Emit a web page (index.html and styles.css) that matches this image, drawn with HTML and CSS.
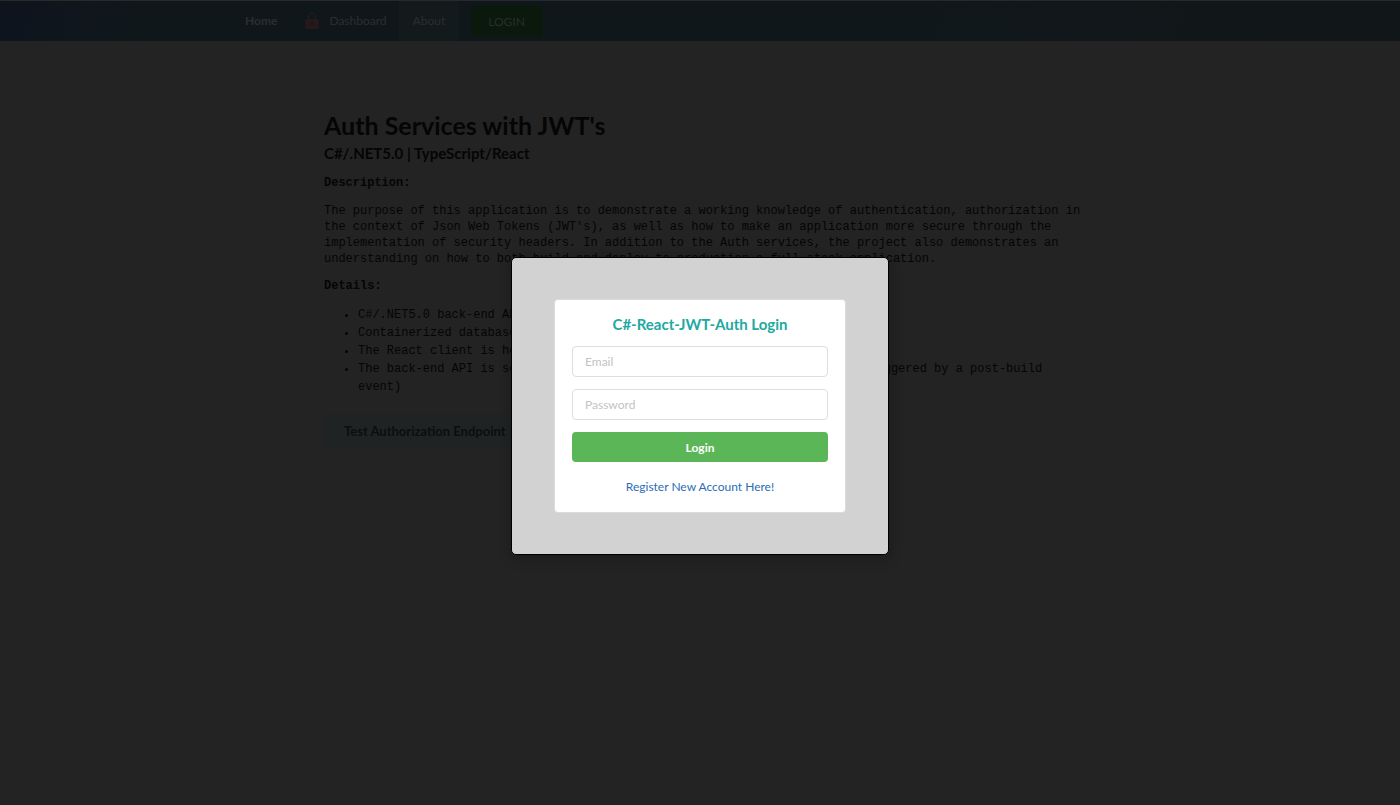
FILE: index.html
```html
<!DOCTYPE html>
<html lang="en">
<head>
<meta charset="utf-8">
<title>Auth Services with JWT's</title>
<link rel="stylesheet" href="styles.css">
</head>
<body>
<header class="navbar">
  <nav class="nav-inner" aria-label="Main">
    <a class="nav-item brand" href="#">Home</a>
    <a class="nav-item dashboard" href="#">
      <svg class="lock" viewBox="0 0 14 18" aria-hidden="true">
        <path d="M3.5 8V5a3.5 3.5 0 0 1 7 0v3" fill="none" stroke="#261a1b" stroke-width="1.5"/>
        <rect x="0.5" y="7" width="13" height="10" rx="1.5" fill="#291819"/>
        <circle cx="7" cy="11.5" r="1.4" fill="#10171b"/>
      </svg>
      Dashboard
    </a>
    <a class="nav-item active" href="#">About</a>
    <button class="nav-login" type="button">LOGIN</button>
  </nav>
</header>
<main class="content">
  <h1>Auth Services with JWT's</h1>
  <h2>C#/.NET5.0 | TypeScript/React</h2>
  <h3>Description:</h3>
  <p>The purpose of this application is to demonstrate a working knowledge of authentication, authorization in the context of Json Web Tokens (JWT's), as well as how to make an application more secure through the implementation of security headers. In addition to the Auth services, the project also demonstrates an understanding on how to both build and deploy to production a full stack application.</p>
  <h3>Details:</h3>
  <ul>
    <li>C#/.NET5.0 back-end API</li>
    <li>Containerized database</li>
    <li>The React client is hosted</li>
    <li>The back-end API is served from a Docker container on Heroku (deploys triggered by a post-build event)</li>
  </ul>
  <button class="test-button" type="button">Test Authorization Endpoint</button>
</main>
<div class="overlay">
  <section class="modal" role="dialog" aria-modal="true" aria-labelledby="login-title">
    <form class="card">
      <h2 class="card-title" id="login-title">C#-React-JWT-Auth Login</h2>
      <input class="field" type="email" placeholder="Email" aria-label="Email">
      <input class="field" type="password" placeholder="Password" aria-label="Password">
      <button class="submit" type="button">Login</button>
      <a class="register" href="#">Register New Account Here!</a>
    </form>
  </section>
</div>
</body>
</html>
```
FILE: styles.css
```css
* { box-sizing: border-box; }

body {
  margin: 0;
  min-height: 100vh;
  background: #232323;
  color: #050505;
  font: 12px/16px Lato, "Liberation Sans", sans-serif;
}

button, input { font-family: inherit; }

.navbar {
  height: 41px;
  border-top: 1px solid #292929;
  background: linear-gradient(100deg, #0e141e 0, #10171b 10%, #10171b 60%, #111718 100%);
}

.nav-inner {
  display: flex;
  align-items: center;
  height: 100%;
  max-width: 938px;
  margin: 0 auto;
}

.nav-item {
  display: flex;
  align-items: center;
  height: 100%;
  padding: 0 14px;
  color: #2b2e30;
  text-decoration: none;
}

.brand { font-weight: 700; }

.dashboard { gap: 10px; padding-right: 12px; }

.lock { width: 14px; height: 18px; }

.active { background: #131a1c; }

.nav-login {
  height: 30px;
  margin-left: 12px;
  padding: 0 17px;
  border: 0;
  border-radius: 3px;
  background: #0b180c;
  color: #292e29;
  font-size: 12px;
}

.content {
  width: 760px;
  max-width: 100%;
  margin-left: calc(50% - 376px);
  padding-top: 67px;
}

.content h1 {
  margin: 0;
  font-size: 25px;
  line-height: 34px;
}

.content h2 {
  margin: 0;
  padding: 2px 0;
  font-size: 15px;
  line-height: 18px;
}

.content h3,
.content p,
.content ul {
  margin: 12px 0 0;
  font-family: "Courier New", "Liberation Mono", monospace;
  font-size: 12px;
}

.content h3 { line-height: 15px; }

.content ul { padding-left: 34px; line-height: 18px; }

.test-button {
  height: 34px;
  margin-top: 18px;
  padding: 0 20px;
  border: 0;
  border-radius: 3px;
  background: #202323;
  color: #0d0e0e;
  font-size: 13px;
  font-weight: 700;
}

.overlay {
  position: fixed;
  inset: 0;
  display: flex;
  align-items: center;
  justify-content: center;
  padding-top: 7px;
}

.modal {
  width: 378px;
  max-width: 100%;
  padding: 41px 42px;
  border: 1px solid #000;
  border-radius: 5px;
  background: #d2d2d2;
  box-shadow: 1px 3px 12px 2px rgba(0, 0, 0, 0.2);
}

.card {
  display: flex;
  flex-direction: column;
  gap: 12px;
  padding: 15px 17px;
  border: 1px solid #dcdcdc;
  border-radius: 4px;
  background: #fff;
}

.card-title {
  margin: 0;
  color: #21a9a1;
  font-size: 15px;
  line-height: 19px;
  text-align: center;
}

.field {
  width: 100%;
  height: 31px;
  padding: 0 12px;
  border: 1px solid #dededf;
  border-radius: 4px;
  background: #fff;
  color: #222;
  font-size: 12px;
}

.field::placeholder { color: #c3c3c3; }

.submit {
  height: 30px;
  border: 0;
  border-radius: 4px;
  background: #5ab656;
  color: #fff;
  font-size: 12px;
  font-weight: 700;
}

.register {
  padding: 5px 0 2px;
  color: #2b6cb8;
  text-align: center;
  text-decoration: none;
}
```
